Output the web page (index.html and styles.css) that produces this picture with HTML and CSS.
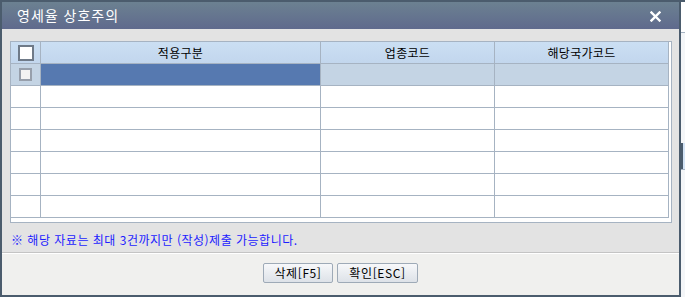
FILE: index.html
```html
<!DOCTYPE html>
<html lang="ko">

<head>
  <meta charset="UTF-8">
  <title>영세율 상호주의</title>
  <link rel="stylesheet" href="styles.css">
</head>

<body>
  <div class="dialog">
    <div class="dialog-title">
      <span class="dialog-title-text">영세율 상호주의</span>
      <span class="dialog-close">
        <svg width="11" height="11" viewBox="0 0 11 11">
          <path d="M1.5 1.5 L9.5 9.5 M9.5 1.5 L1.5 9.5" stroke="#fff" stroke-width="2.4" stroke-linecap="square" />
        </svg>
      </span>
    </div>

    <div class="dialog-body">
      <div class="grid">
        <div class="grid-row grid-header">
          <div class="grid-cell"><span class="chk chk-all"></span></div>
          <div class="grid-cell">적용구분</div>
          <div class="grid-cell">업종코드</div>
          <div class="grid-cell">해당국가코드</div>
        </div>
        <div class="grid-row grid-current">
          <div class="grid-cell"><span class="chk"></span></div>
          <div class="grid-cell grid-selected"></div>
          <div class="grid-cell"></div>
          <div class="grid-cell"></div>
        </div>
        <div class="grid-row"><div class="grid-cell"></div><div class="grid-cell"></div><div class="grid-cell"></div><div class="grid-cell"></div></div>
        <div class="grid-row"><div class="grid-cell"></div><div class="grid-cell"></div><div class="grid-cell"></div><div class="grid-cell"></div></div>
        <div class="grid-row"><div class="grid-cell"></div><div class="grid-cell"></div><div class="grid-cell"></div><div class="grid-cell"></div></div>
        <div class="grid-row"><div class="grid-cell"></div><div class="grid-cell"></div><div class="grid-cell"></div><div class="grid-cell"></div></div>
        <div class="grid-row"><div class="grid-cell"></div><div class="grid-cell"></div><div class="grid-cell"></div><div class="grid-cell"></div></div>
        <div class="grid-row"><div class="grid-cell"></div><div class="grid-cell"></div><div class="grid-cell"></div><div class="grid-cell"></div></div>
      </div>
      <div class="notice">※ 해당 자료는 최대 3건까지만 (작성)제출 가능합니다.</div>
    </div>

    <div class="dialog-footer">
      <button class="btn btn-del">삭제[F5]</button>
      <button class="btn btn-ok">확인[ESC]</button>
    </div>
  </div>

  <!-- 뒤쪽 화면 일부 -->
  <div class="behind">
    <div class="behind-top"></div>
    <div class="behind-line"></div>
    <div class="behind-blue"></div>
    <div class="behind-line"></div>
  </div>
</body>

</html>
```

FILE: styles.css
```css
html,
body {
  margin: 0;
  padding: 0;
}

body {
  display: flex;
  width: 685px;
  height: 297px;
  overflow: hidden;
  background-color: #fff;
  font-family: "Noto Sans CJK KR", "DejaVu Sans", sans-serif;
  font-size: 12px;
}

.dialog {
  display: flex;
  flex-direction: column;
  width: 681px;
  height: 297px;
  box-sizing: border-box;
  border: 2px solid #4b5c6d;
  background-color: #e3e3e3;
}

.dialog-title {
  display: flex;
  align-items: center;
  justify-content: space-between;
  height: 27px;
  padding: 0 18px 0 15px;
  background: linear-gradient(#6c8191, #5f6a8d);
  color: #fff;
}

.dialog-title-text {
  font-size: 14px;
  letter-spacing: 1px;
  line-height: 27px;
}

.dialog-close {
  display: flex;
  margin-top: 1px;
}

.dialog-body {
  height: 224px;
  padding: 12px 7px 0 8px;
  box-sizing: border-box;
  border-bottom: 1px solid #c4c4c4;
}

.grid {
  width: 662px;
  height: 182px;
  box-sizing: border-box;
  border: 1px solid #a6b3c2;
  background-color: #fff;
}

.grid-row {
  display: grid;
  grid-template-columns: 30px 280px 174px 174px;
  height: 22px;
}

.grid-cell {
  display: flex;
  align-items: center;
  justify-content: center;
  box-sizing: border-box;
  border-right: 1px solid #a6b3c2;
  border-bottom: 1px solid #a6b3c2;
  color: #000;
  letter-spacing: 0.3px;
}

.grid-header .grid-cell {
  background: linear-gradient(#cbdff3, #c2d6ed);
}

.grid-current .grid-cell {
  background-color: #c4d4e4;
}

.grid-current .grid-selected {
  background-color: #5679b0;
}

.chk {
  display: block;
  width: 13px;
  height: 13px;
  box-sizing: border-box;
  border: 2px solid #979fab;
  background-color: #f3f3f3;
}

.chk-all {
  width: 16px;
  height: 16px;
  border: 2px solid #6f7a88;
  background-color: #fff;
}

.notice {
  padding: 8px 0 0 1px;
  color: #1c1cff;
  font-size: 12px;
  line-height: 17px;
  letter-spacing: 0.5px;
}

.dialog-footer {
  display: flex;
  justify-content: center;
  gap: 4px;
  flex: 1;
  padding-top: 9px;
  border-top: 1px solid #fff;
  background-color: #f0f0ee;
}

.btn {
  height: 20px;
  padding: 0;
  border: 1px solid #9eaab7;
  border-radius: 2px;
  background: linear-gradient(#f7f8fa, #dde2e8);
  font-family: "Noto Sans CJK KR", "DejaVu Sans", sans-serif;
  font-size: 12px;
  line-height: 18px;
  letter-spacing: 0.6px;
  color: #000;
}

.btn-del {
  width: 70px;
}

.btn-ok {
  width: 81px;
}

.behind {
  display: flex;
  flex-direction: column;
  flex: 1;
  background-color: #f4f6f8;
}

.behind-top {
  height: 30px;
  border-top: 2px solid #4b5c6d;
  background-color: #fff;
}

.behind-line {
  height: 110px;
  border-top: 1px solid #a6b3c2;
}

.behind-blue {
  height: 26px;
  background-color: #d4e4f6;
  border-left: 2px solid #4b5c6d;
}
```
